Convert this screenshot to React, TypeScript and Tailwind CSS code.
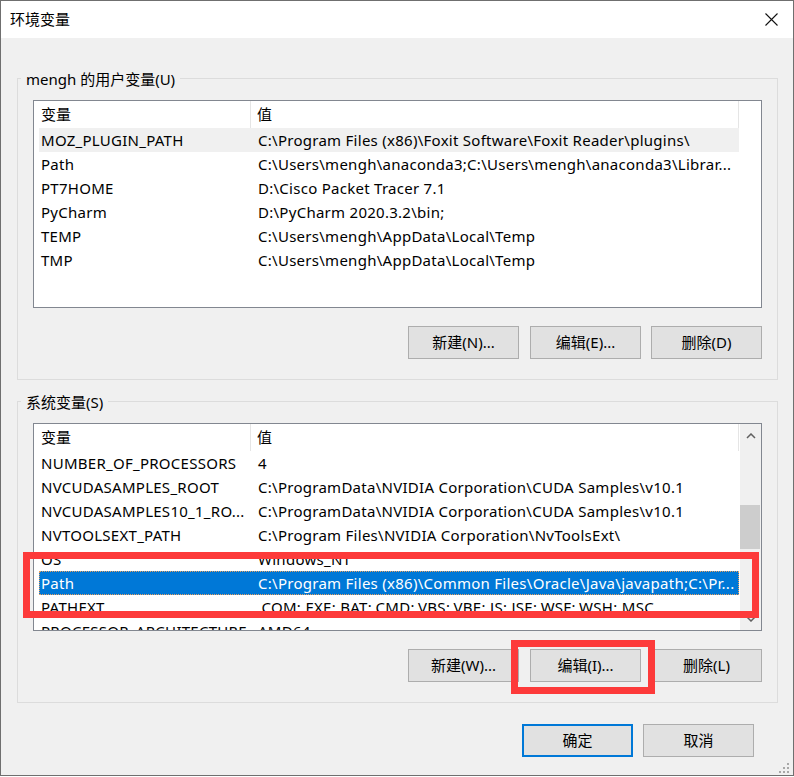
import React from 'react';

type Row = [string, string];

const userVars: Row[] = [
  ['MOZ_PLUGIN_PATH', 'C:\\Program Files (x86)\\Foxit Software\\Foxit Reader\\plugins\\'],
  ['Path', 'C:\\Users\\mengh\\anaconda3;C:\\Users\\mengh\\anaconda3\\Librar...'],
  ['PT7HOME', 'D:\\Cisco Packet Tracer 7.1'],
  ['PyCharm', 'D:\\PyCharm 2020.3.2\\bin;'],
  ['TEMP', 'C:\\Users\\mengh\\AppData\\Local\\Temp'],
  ['TMP', 'C:\\Users\\mengh\\AppData\\Local\\Temp'],
];

const sysVars: Row[] = [
  ['NUMBER_OF_PROCESSORS', '4'],
  ['NVCUDASAMPLES_ROOT', 'C:\\ProgramData\\NVIDIA Corporation\\CUDA Samples\\v10.1'],
  ['NVCUDASAMPLES10_1_RO...', 'C:\\ProgramData\\NVIDIA Corporation\\CUDA Samples\\v10.1'],
  ['NVTOOLSEXT_PATH', 'C:\\Program Files\\NVIDIA Corporation\\NvToolsExt\\'],
  ['OS', 'Windows_NT'],
  ['Path', 'C:\\Program Files (x86)\\Common Files\\Oracle\\Java\\javapath;C:\\Pr...'],
  ['PATHEXT', '.COM;.EXE;.BAT;.CMD;.VBS;.VBE;.JS;.JSE;.WSF;.WSH;.MSC'],
  ['PROCESSOR_ARCHITECTURE', 'AMD64'],
];

const Button: React.FC<{ label: string; primary?: boolean; className?: string }> = ({
  label,
  primary = false,
  className = '',
}) => (
  <button
    className={`w-[111px] h-[33px] flex items-center justify-center bg-[#e1e1e1] ${
      primary ? 'border-2 border-[#0078d7]' : 'border border-[#adadad]'
    } ${className}`}
  >
    {label}
  </button>
);

const Scrollbar: React.FC = () => (
  <div className="w-[21px] h-full bg-[#f0f0f0] flex flex-col items-center">
    <div className="h-[24px] w-full flex items-center justify-center">
      <svg width="10" height="6" viewBox="0 0 10 6">
        <polyline points="1,5 5,1 9,5" fill="none" stroke="#606060" strokeWidth="1.5" />
      </svg>
    </div>
    <div className="mt-[57px] w-[20px] self-start h-[44px] bg-[#cdcdcd]" />
    <div className="flex-1" />
    <div className="h-[22px] w-full flex items-center justify-center">
      <svg width="10" height="6" viewBox="0 0 10 6">
        <polyline points="1,1 5,5 9,1" fill="none" stroke="#606060" strokeWidth="1.5" />
      </svg>
    </div>
  </div>
);

const VarList: React.FC<{ rows: Row[]; hovered?: number; selected?: number; scroll?: boolean }> = ({
  rows,
  hovered,
  selected,
  scroll = false,
}) => (
  <div className="h-[208px] border border-[#828790] bg-white flex overflow-hidden">
    <div className="w-[705px] pl-[5px] flex flex-col overflow-hidden">
      <div className="h-[27px] shrink-0 flex items-center">
        <div className="w-[212px] h-full pl-[2px] flex items-center border-r border-[#e5e5e5]">变量</div>
        <div className="w-[488px] h-full pl-[6px] flex items-center border-r border-[#e5e5e5]">值</div>
      </div>
      {rows.map(([name, value], i) => (
        <div
          key={name + i}
          className={`w-[700px] h-[24px] shrink-0 flex items-center whitespace-nowrap tracking-[0.27px] ${
            i === selected
              ? 'bg-[#0078d7] text-white outline-1 outline-dotted outline-[#e8a060] -outline-offset-1'
              : i === hovered
              ? 'bg-[#f0f0f0]'
              : ''
          }`}
        >
          <div className="w-[212px] pl-[2px] overflow-hidden">{name}</div>
          <div className="w-[488px] pl-[7px] overflow-hidden">{value}</div>
        </div>
      ))}
    </div>
    <div className="flex-1" />
    {scroll && <Scrollbar />}
  </div>
);

const Group: React.FC<{ title: string; children: React.ReactNode; className?: string }> = ({
  title,
  children,
  className = '',
}) => (
  <div className={`w-[761px] h-[302px] ml-[16px] border border-[#dcdcdc] px-[15px] ${className}`}>
    <div className="-mt-[10px] -ml-[12px] w-fit px-[5px] bg-[#f0f0f0] leading-[20px]">{title}</div>
    <div className="mt-[11px]">{children}</div>
  </div>
);

export default function App() {
  return (
    <div className="relative w-[794px] h-[776px] border border-[#6f6f6f] flex flex-col bg-[#f0f0f0] text-[15px] text-black font-['Noto_Sans','Noto_Sans_CJK_SC',sans-serif] overflow-hidden">
      {/* title bar */}
      <div className="h-[37px] shrink-0 bg-white flex items-center justify-between pl-[9px] pr-[15px]">
        <span>环境变量</span>
        <svg width="13" height="13" viewBox="0 0 13 13">
          <path d="M0.5 0.5 L12.5 12.5 M12.5 0.5 L0.5 12.5" stroke="#111" strokeWidth="1.1" />
        </svg>
      </div>

      <Group title="mengh 的用户变量(U)" className="mt-[40px]">
        <VarList rows={userVars} hovered={0} />
        <div className="mt-[18px] flex justify-end">
          <Button label="新建(N)..." />
          <Button label="编辑(E)..." className="ml-[11px]" />
          <Button label="删除(D)" className="ml-[10px]" />
        </div>
      </Group>

      <Group title="系统变量(S)" className="mt-[21px]">
        <VarList rows={sysVars} selected={5} scroll />
        <div className="mt-[18px] flex justify-end">
          <Button label="新建(W)..." />
          <Button label="编辑(I)..." className="ml-[11px]" />
          <Button label="删除(L)" className="ml-[10px]" />
        </div>
      </Group>

      <div className="mt-[21px] flex justify-end pr-[39px]">
        <Button label="确定" primary />
        <Button label="取消" className="ml-[10px]" />
      </div>

      {/* red annotation boxes */}
      <div className="absolute left-[22px] top-[551px] w-[736px] h-[66px] border-[7px] border-[#fd3a3a]" />
      <div className="absolute left-[510px] top-[639px] w-[144px] h-[54px] border-[7px] border-[#fd3a3a]" />

      {/* resize grip */}
      <svg className="absolute right-[3px] bottom-[1px]" width="12" height="12" viewBox="0 0 12 12">
        <rect x="9" y="1" width="2" height="2" fill="#a8a8a8" />
        <rect x="5" y="5" width="2" height="2" fill="#a8a8a8" />
        <rect x="9" y="5" width="2" height="2" fill="#a8a8a8" />
        <rect x="1" y="9" width="2" height="2" fill="#a8a8a8" />
        <rect x="5" y="9" width="2" height="2" fill="#a8a8a8" />
        <rect x="9" y="9" width="2" height="2" fill="#a8a8a8" />
      </svg>
    </div>
  );
}
